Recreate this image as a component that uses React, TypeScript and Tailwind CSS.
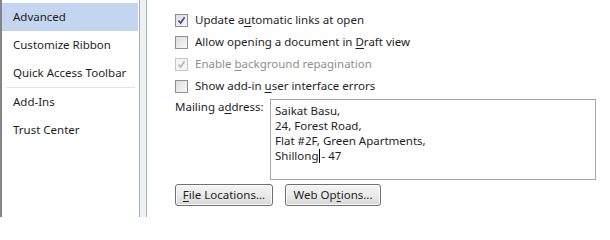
import React from 'react';

const font = { fontFamily: '"Noto Sans", "Open Sans", sans-serif' };

const navItems = [
  { label: 'Advanced', active: true },
  { label: 'Customize Ribbon' },
  { label: 'Quick Access Toolbar', divider: true },
  { label: 'Add-Ins' },
  { label: 'Trust Center' },
];

const Check = ({ checked, disabled }: { checked?: boolean; disabled?: boolean }) => (
  <span
    className={`flex h-[13px] w-[13px] shrink-0 items-center justify-center border ${
      disabled ? 'border-[#c4c4c4] bg-[#f4f4f4]' : 'border-[#8f8f8f] bg-gradient-to-br from-[#dcdcdc] to-[#f8f8f8]'
    }`}
  >
    {checked && (
      <svg width="9" height="9" viewBox="0 0 9 9">
        <path
          d="M1.5 4.5 L3.6 7 L7.6 1.2"
          fill="none"
          stroke={disabled ? '#b8b8b8' : '#3d4f9a'}
          strokeWidth="1.7"
        />
      </svg>
    )}
  </span>
);

const options = [
  { pre: 'Update a', key: 'u', post: 'tomatic links at open', checked: true },
  { pre: 'Allow opening a document in ', key: 'D', post: 'raft view' },
  { pre: 'Enable ', key: 'b', post: 'ackground repagination', checked: true, disabled: true },
  { pre: 'Show add-in ', key: 'u', post: 'ser interface errors' },
];

export default function App() {
  return (
    <div className="flex h-[217px] w-[610px] overflow-hidden bg-white text-[11.5px] text-[#1e1e1e]" style={font}>
      {/* Left navigation */}
      <div className="flex w-[139px] shrink-0 flex-col border-l-2 border-[#858585] pt-[3px]">
        {navItems.map((item) => (
          <React.Fragment key={item.label}>
            <div
              className={`flex h-[28px] items-center pl-[11px] ${
                item.active ? 'mr-[1px] bg-[#c4d5ef]' : ''
              }`}
            >
              {item.label}
            </div>
            {item.divider && <div className="mx-[4px] h-px bg-[#dde3ea]" />}
          </React.Fragment>
        ))}
      </div>

      {/* Splitter */}
      <div className="w-[8px] shrink-0 border-x border-[#a9b0b8] bg-[#eef1f4]" />

      {/* Content */}
      <div className="flex flex-1 flex-col pl-[28px] pt-[9px]">
        <div className="flex flex-col">
          {options.map((o, i) => (
            <label key={i} className="flex h-[22px] items-center gap-[7px]">
              <Check checked={o.checked} disabled={o.disabled} />
              <span className={o.disabled ? 'text-[#8e8e8e]' : ''}>
                {o.pre}
                <span className="underline underline-offset-2">{o.key}</span>
                {o.post}
              </span>
            </label>
          ))}
        </div>

        <div className="mt-[2px] flex">
          <span className="w-[95px] shrink-0 leading-[15px]">
            Mailing a<span className="underline underline-offset-2">d</span>dress:
          </span>
          <div className="h-[81px] w-[326px] border border-[#a7a7a7] px-[4px] pt-[3px] leading-[15px]">
            <div>Saikat Basu,</div>
            <div>24, Forest Road,</div>
            <div>Flat #2F, Green Apartments,</div>
            <div className="flex items-center">
              Shillong
              <span className="mx-[1px] inline-block h-[14px] w-px bg-black" />- 47
            </div>
          </div>
        </div>

        <div className="mt-[4px] flex gap-[12px]">
          <button className="h-[22px] w-[98px] rounded-[3px] border border-[#707070] bg-gradient-to-b from-[#f3f3f3] via-[#ebebeb] to-[#d6d6d6] text-[11.5px] shadow-[inset_0_0_0_1px_#fcfcfc]">
            <span className="underline underline-offset-2">F</span>ile Locations...
          </button>
          <button className="h-[22px] w-[96px] rounded-[3px] border border-[#707070] bg-gradient-to-b from-[#f3f3f3] via-[#ebebeb] to-[#d6d6d6] text-[11.5px] shadow-[inset_0_0_0_1px_#fcfcfc]">
            Web Op<span className="underline underline-offset-2">t</span>ions...
          </button>
        </div>
      </div>
    </div>
  );
}
